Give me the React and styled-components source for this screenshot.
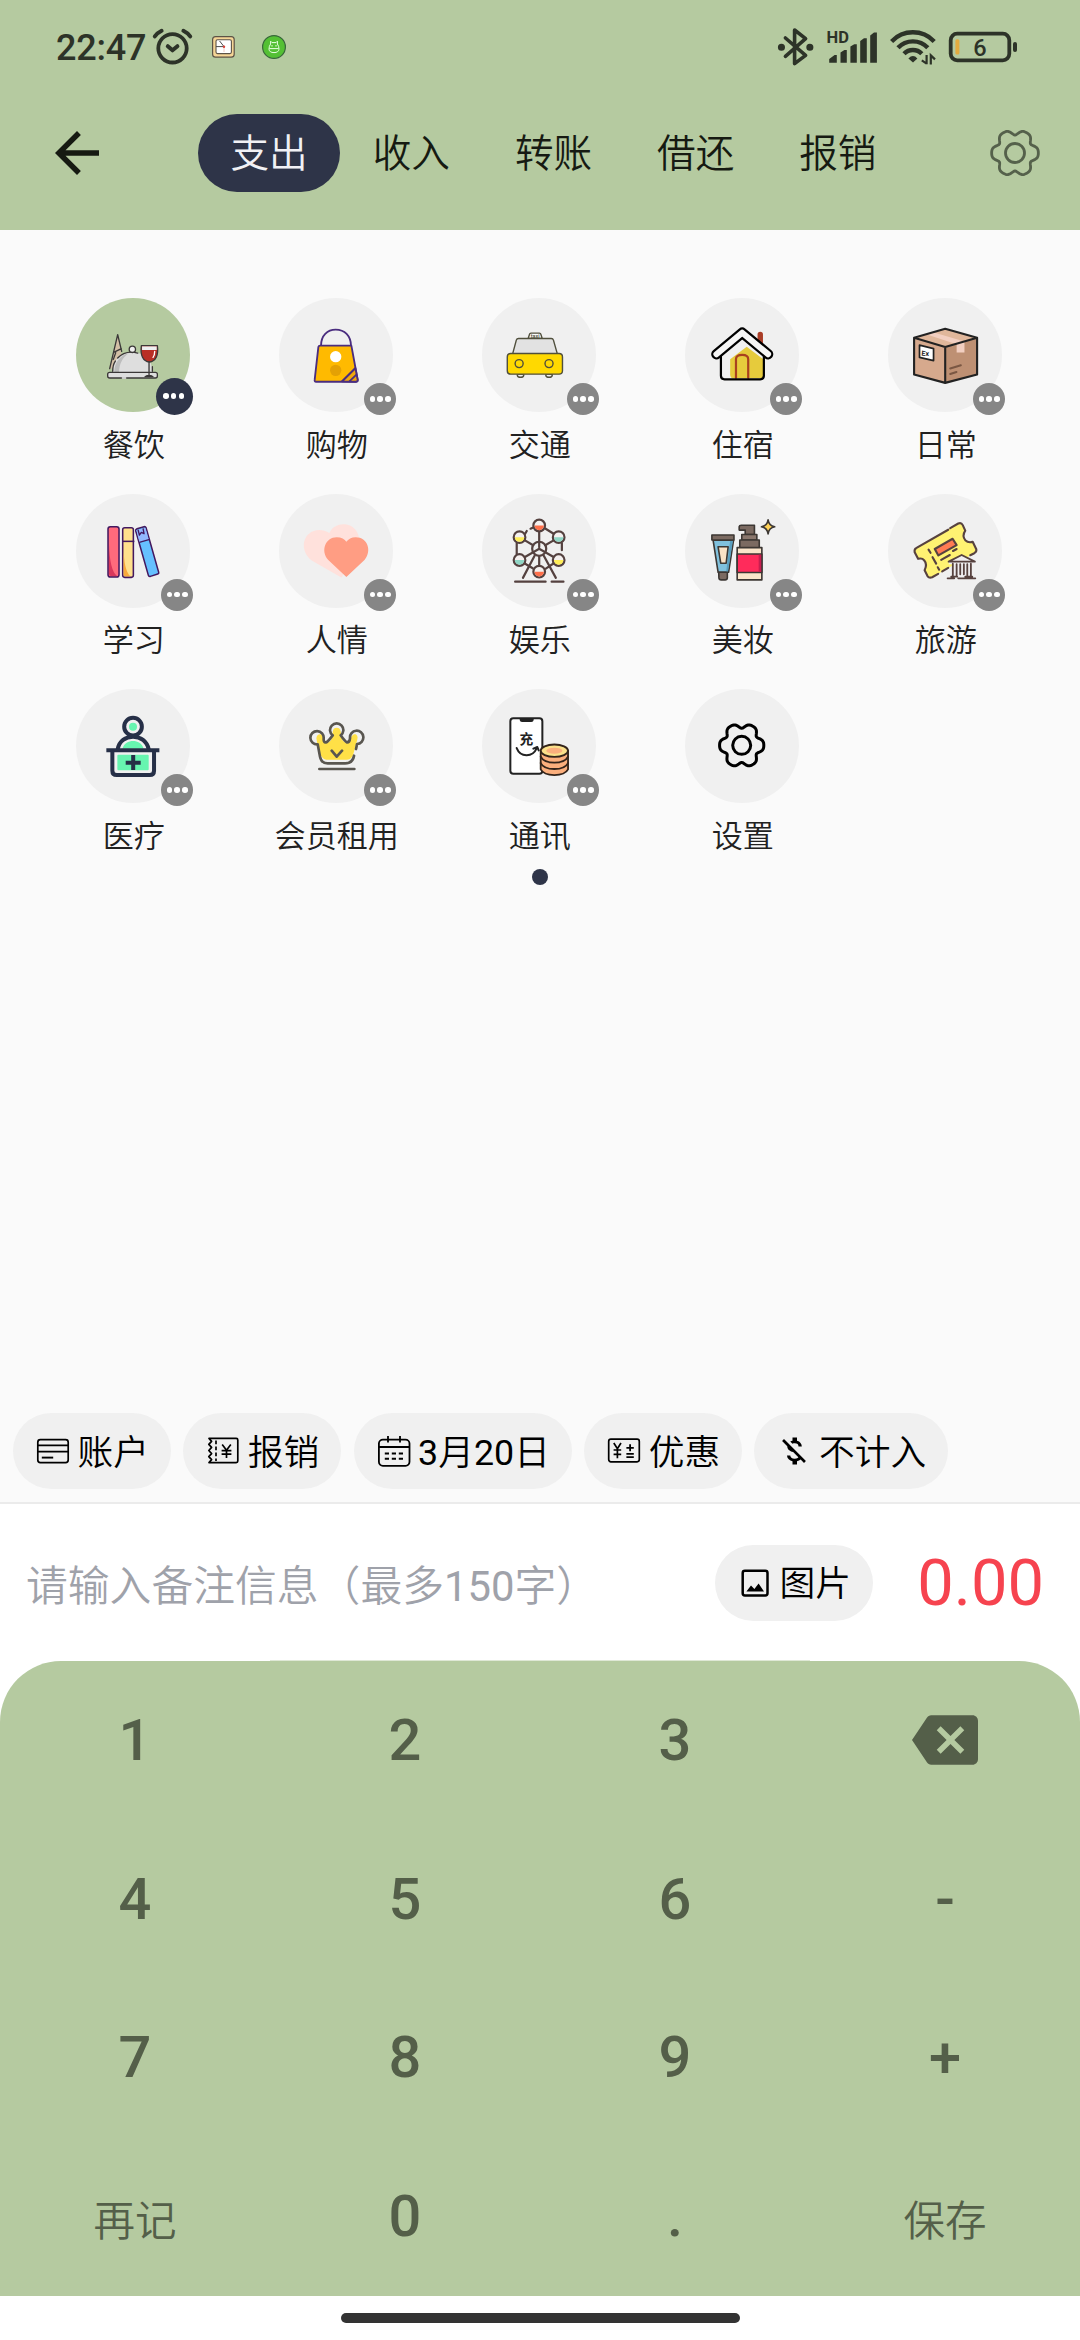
import React from "react";
import styled, { createGlobalStyle } from "styled-components";

const GREEN = "#b5caa0";
const INK = "#2e3448";
const KEY = "#545f49";
const STATUS = "#2d3328";

const GlobalStyle = createGlobalStyle`
  *, *::before, *::after { box-sizing: border-box; }
  body {
    margin: 0;
    background: #fafafa;
    font-family: Roboto, "Noto Sans CJK SC", sans-serif;
  }
`;

const Screen = styled.div`
  width: 1080px;
  height: 2340px;
  display: flex;
  flex-direction: column;
  background: #fafafa;
  overflow: hidden;
`;

const Header = styled.header`
  height: 230px;
  background: ${GREEN};
  display: flex;
  flex-direction: column;
`;

const StatusBar = styled.div`
  height: 94px;
  padding: 0 62px 0 56px;
  display: flex;
  align-items: center;
  justify-content: space-between;
`;

const StatusGroup = styled.div`
  display: flex;
  align-items: center;
  gap: ${(p) => p.$gap}px;
`;

const Clock = styled.span`
  width: 91px;
  font-size: 36px;
  font-weight: 500;
  line-height: 40px;
  letter-spacing: -0.2px;
  color: ${STATUS};
  padding-top: 2px;
`;

const Glyph = styled.svg`
  display: block;
  flex: none;
  width: ${(p) => p.$w}px;
  height: ${(p) => p.$h || p.$w}px;
  overflow: visible;
`;

const Toolbar = styled.nav`
  height: 118px;
  padding: 0 40px 0 44px;
  display: flex;
  align-items: center;
`;

const Tabs = styled.div`
  display: flex;
  margin-left: 88px;
  margin-right: auto;
`;

const Tab = styled.button`
  border: 0;
  width: 142.2px;
  height: 78px;
  padding: 2px 0 0;
  border-radius: 39px;
  background: ${(p) => (p.$active ? INK : "transparent")};
  color: ${(p) => (p.$active ? "#f1f1f5" : "#161a12")};
  font-family: inherit;
  font-size: 38.6px;
  font-weight: 350;
  line-height: 76px;
`;

const Body = styled.main`
  flex: 1;
  display: flex;
  flex-direction: column;
  padding-top: 68px;
`;

const Grid = styled.div`
  display: grid;
  grid-template-columns: repeat(5, 203px);
  grid-auto-rows: 195.5px;
  padding-left: 31.5px;
`;

const Cell = styled.div`
  display: flex;
  flex-direction: column;
  align-items: center;
`;

const Disc = styled.div`
  position: relative;
  width: 114.4px;
  height: 114.4px;
  border-radius: 50%;
  background: ${(p) => (p.$selected ? GREEN : "#f0f0f0")};
`;

const Badge = styled.span`
  position: absolute;
  right: -3px;
  bottom: -3px;
  width: ${(p) => (p.$selected ? 37 : 32)}px;
  height: ${(p) => (p.$selected ? 37 : 32)}px;
  border-radius: 50%;
  background: ${(p) => (p.$selected ? INK : "#868686")};
  display: flex;
  align-items: center;
  justify-content: center;
  gap: 2.3px;
  padding: 0 ${(p) => (p.$selected ? 2 : 0)}px ${(p) => (p.$selected ? 2 : 1)}px 0;
`;

const Dot = styled.i`
  width: 5.6px;
  height: 5.6px;
  border-radius: 50%;
  background: #fff;
`;

const Label = styled.span`
  margin-top: 11.5px;
  padding-left: 1.5px;
  font-size: 31.1px;
  font-weight: 350;
  line-height: 44px;
  color: #212121;
  white-space: nowrap;
`;

const PageDot = styled.i`
  width: 16px;
  height: 16px;
  border-radius: 50%;
  background: ${INK};
  margin: -16px auto 0;
`;

const Chips = styled.div`
  margin-top: auto;
  display: flex;
  gap: 12.3px;
  padding: 0 13px 13px;
`;

const Chip = styled.button`
  border: 0;
  height: 76px;
  padding: 0 22px;
  border-radius: 38px;
  background: #f0f0f0;
  color: #000;
  display: flex;
  align-items: center;
  gap: 6.5px;
  font-family: inherit;
  font-size: 35.75px;
  font-weight: 350;
  white-space: nowrap;
  flex: none;
`;

const ChipText = styled.span`
  padding-top: 3px;
  line-height: 60px;
`;

const Digits = styled.span`
  font-weight: 400;
`;

const NoteBar = styled.section`
  height: 159px;
  border-top: 2px solid #ebebeb;
  background: #fff;
  display: flex;
  align-items: center;
  padding: 0 36px 0 26px;
`;

const Placeholder = styled.span`
  flex: 1;
  font-size: 41.8px;
  font-weight: 350;
  line-height: 60px;
  color: #9fa2aa;
  white-space: nowrap;
  padding-top: 9px;
`;

const Amount = styled.span`
  width: 171px;
  text-align: right;
  font-size: 65px;
  line-height: 76px;
  color: #f6434f;
`;

const KeypadWrap = styled.div`
  background: #fff;
`;

const Keypad = styled.section`
  position: relative;
  height: 635px;
  background: ${GREEN};
  border-radius: 61px 61px 0 0;
  display: grid;
  grid-template-columns: repeat(4, 270px);
  grid-template-rows: repeat(4, 158.75px);
  &::before {
    content: "";
    position: absolute;
    top: -1px;
    left: 270px;
    width: 540px;
    height: 1px;
    background: #dfe8d6;
  }
`;

const Key = styled.button`
  border: 0;
  padding: ${(p) => (p.$word ? "3px 0 0" : "0 0 1px")};
  background: none;
  display: flex;
  align-items: center;
  justify-content: center;
  font-family: inherit;
  font-size: ${(p) => (p.$word ? 41.5 : 57.75)}px;
  font-weight: ${(p) => (p.$word ? 350 : 500)};
  color: ${KEY};
`;

const NavBar = styled.footer`
  height: 44px;
  background: #fff;
  display: flex;
  justify-content: center;
  padding-top: 17px;
`;

const HomePill = styled.i`
  width: 399px;
  height: 10px;
  border-radius: 5px;
  background: #333;
`;

/* ---------- gear ---------- */

// Six-lobed outline sampled in polar coordinates around the origin.
const gearPath =
  Array.from({ length: 120 }, (_, i) => {
    const t = (i / 120) * Math.PI * 2;
    const r = 60.5 + 7.6 * Math.cos(6 * t) - 1.8 * Math.cos(12 * t);
    return `${i ? "L" : "M"}${(r * Math.cos(t)).toFixed(2)} ${(r * Math.sin(t)).toFixed(2)}`;
  }).join("") + "Z";

const Gear = ({ color, width = 9 }) => (
  <g fill="none" stroke={color} strokeWidth={width} strokeLinejoin="round">
    <path d={gearPath} />
    <circle r="27" />
  </g>
);

/* ---------- status icons ---------- */

const AlarmIcon = () => (
  <Glyph $w={41} $h={38} viewBox="152 28 41 38" fill="none" stroke={STATUS} strokeLinecap="round">
    <circle cx="172.5" cy="48.3" r="14.2" strokeWidth="3.8" />
    <path d="M167.8 46.2L172.5 50.3L177.4 46.2" strokeWidth="4" strokeLinejoin="round" />
    <path d="M154.8 36.4Q157.5 32.8 161.6 30.8M183.4 30.8Q187.5 32.8 190.2 36.4" strokeWidth="4" />
  </Glyph>
);

const ClockAppIcon = () => (
  <Glyph $w={24} viewBox="211 35 24 24">
    <rect x="212.6" y="36.6" width="21.6" height="20.6" rx="3" fill="#f5d596" stroke="#5c5346" strokeWidth="1.2" />
    <rect x="216" y="39.8" width="15.4" height="13.8" rx="1.5" fill="#fff" stroke="#5c5346" strokeWidth="1.1" />
    <path d="M224 46.6L219.6 41M224 46.6H216" stroke="#4b4b4b" strokeWidth="1" />
    <path d="M224 46.6V52" stroke="#eab7b0" strokeWidth=".8" />
    <circle cx="224" cy="46.8" r="1.2" fill="#d8443a" />
  </Glyph>
);

const CatAppIcon = () => (
  <Glyph $w={24} viewBox="262 35 24 24">
    <circle cx="274" cy="47" r="11.4" fill="#54c034" stroke="#37663a" strokeWidth="1.2" />
    <g fill="none" stroke="#e9ffe2" strokeWidth="1">
      <path d="M270.6 44V41.2L272 42.6H276L277.4 41.2V44Q279 46 279 49.2Q278.6 52.6 274 52.6Q269.4 52.6 269 49.2Q269 46 270.6 44Z" />
      <path d="M269.4 48.6H278.6M272 45V46.6M276 45V46.6" />
    </g>
  </Glyph>
);

const BluetoothIcon = () => (
  <Glyph $w={37} $h={40} viewBox="777.4 27 37 40" fill="none" stroke={STATUS} strokeWidth="3.6" strokeLinejoin="round" strokeLinecap="round">
    <path d="M785.8 38L806 55.4L795 63.6V30L806 38.6L785.8 56.4" />
    <path d="M781.8 47.2h.1M810.2 47.2h.1" strokeWidth="7" />
  </Glyph>
);

const SignalIcon = () => (
  <Glyph $w={50} $h={34} viewBox="825 30 50 34" fill={STATUS}>
    <text x="824.6" y="42.8" fontFamily="Roboto, sans-serif" fontSize="16.5" fontWeight="700">HD</text>
    <path d="M827.2 62.7V59L832.6 55H834.8V62.7ZM838.5 62.7V52.4L842.4 50H844.8V62.7ZM848.4 62.7V46.6L852.3 44.2H854.8V62.7ZM858.2 62.7V41L862 38.2H864.8V62.7ZM868.2 62.7V35.6L872 32.6H874.9V62.7Z" />
  </Glyph>
);

const WifiIcon = () => (
  <Glyph $w={46} $h={36} viewBox="888 30 46 36" fill="none" stroke={STATUS} strokeWidth="4.4">
    <path d="M889.6 42.4A29.5 29.5 0 0 1 932.2 42.4" />
    <path d="M896 48.8A20.5 20.5 0 0 1 925.8 48.8" />
    <path d="M902 54.8A12.4 12.4 0 0 1 919.8 54.8" />
    <path d="M906.4 59.4Q911 54.6 915.4 59.4L911 63.6Z" fill={STATUS} stroke="none" />
    <path d="M924.6 56V65.2M919.8 61.4L924.6 64.6M928.8 65.4V56.4L933 60.4" strokeWidth="2.2" />
  </Glyph>
);

const BatteryIcon = () => (
  <Glyph $w={69} $h={30} viewBox="949 32 69 30">
    <rect x="950.7" y="33.7" width="58.6" height="26.6" rx="6.5" fill="none" stroke={STATUS} strokeWidth="3.8" />
    <rect x="1013" y="42" width="4" height="10" rx="2" fill={STATUS} />
    <rect x="955.4" y="39.2" width="4" height="15.4" rx="1.5" fill="#e3ab3f" />
    <text x="980" y="55.8" textAnchor="middle" fontFamily="Roboto, sans-serif" fontSize="23.5" fontWeight="500" fill={STATUS}>6</text>
  </Glyph>
);

/* ---------- category pictures ---------- */

const DiningPic = () => (
  <Glyph $w={114.4} viewBox="107 54 343 343" fill="none" stroke="#3b3838" strokeWidth="4" strokeLinecap="round" strokeLinejoin="round">
    <path d="M232 164L208 268L222 262Q226 240 244 228Z" fill="#d3bfa6" stroke="none" />
    <path d="M208 266L232 164L244 214M220 217L243 206M219 238L226 218" />
    <path d="M217 276C217 240 240 217 276 217C312 217 336 240 336 276Z" fill="#dedede" stroke="none" />
    <path d="M222 276C222 246 240 226 266 219C246 232 237 252 236 276Z" fill="#bdbdbd" stroke="none" />
    <path d="M217 274C217 258 220 250 225 243M232 234C246 219 268 213 292 219M336 260V274" />
    <circle cx="276" cy="208" r="9.5" fill="#f0f0f0" />
    <rect x="202" y="277" width="149" height="17" rx="6" fill="#dedede" />
    <path d="M246 294H256" stroke="#f4f4f4" />
    <path d="M303 197H351C355 226 346 244 327 246C308 244 299 226 303 197Z" fill="#b92f25" />
    <path d="M305 199H349V210H305Z" fill="#eef0f2" stroke="none" />
    <path d="M343 214Q343 226 338 232" stroke="#fff" />
    <path d="M326 246V284M314 290Q326 282 338 290Z" />
  </Glyph>
);

const BagPic = () => (
  <Glyph $w={114.4} viewBox="716 54 343 343" fill="none" stroke="#4a2d7f" strokeWidth="5.5" strokeLinejoin="round">
    <path d="M842 197C842 166 861 149 886 149C913 149 931 167 932 197" />
    <path d="M839 197H933L952 300Q952 305 946 305H827Q822 305 823 299L834 201Q835 197 839 197Z" fill="#ffba00" />
    <path d="M905 304L945 264L952 300Q952 305 946 305Z" fill="#f0a80c" />
    <path d="M927 304L949 283M905 304L945 264" />
    <circle cx="886" cy="230" r="17" fill="#fff" stroke="none" />
    <circle cx="886" cy="271" r="17" fill="#e4a104" stroke="none" />
  </Glyph>
);

const TaxiPic = () => (
  <Glyph $w={114.4} viewBox="0 0 114 114" fill="none" stroke="#504f3c" strokeWidth="1.4" strokeLinejoin="round">
    <path d="M35.2 76V77Q35.6 79 38.4 79Q41.2 79 41.6 77V76ZM63.6 76V77Q64 79 66.8 79Q69.6 79 70 77V76Z" fill="#f5f5f5" />
    <path d="M46 40.4L47.4 36Q47.6 35 48.8 35H57.2Q58.4 35 58.6 36L60 40.4Z" fill="#fafafa" />
    <text x="53" y="39.6" textAnchor="middle" stroke="none" fill="#504f3c" fontFamily="Roboto, sans-serif" fontWeight="500" fontSize="5.4">taxi</text>
    <path d="M30.6 55.4L34.2 42Q34.7 40.4 36.4 40.4H69Q70.7 40.4 71.2 42L75 55.4Z" fill="#e2e2e2" />
    <rect x="25.2" y="55.3" width="55" height="20.6" rx="3.4" fill="#ffd900" />
    <circle cx="37" cy="65.4" r="4" />
    <circle cx="66.8" cy="65.4" r="4" />
  </Glyph>
);

const HousePic = () => (
  <Glyph $w={114.4} viewBox="0 0 114 114" fill="none" strokeLinecap="round" strokeLinejoin="round">
    <path d="M75 36.3V46" stroke="#a93d27" strokeWidth="5.4" />
    <path d="M35.8 58L57 39L78.6 58V78Q78.6 80.6 76 80.6H39Q35.8 80.6 35.8 77.6Z" fill="#f0f0f0" />
    <path d="M45 61L61.5 48.6L78 61V80H48Q45 80 45 76Z" fill="#e6cb3c" />
    <path d="M50.8 79.5V61Q50.8 56.6 57 56.6Q63 56.6 63 61V79.5" stroke="#a9411f" strokeWidth="2.2" />
    <path d="M35.8 58V77.6Q35.8 81 39.4 81H75Q78.6 81 78.6 77.6V58" stroke="#000" strokeWidth="2.2" />
    <path d="M31.3 56L57 34.6L82.8 56" stroke="#000" strokeWidth="10.4" />
    <path d="M31.3 56L57 34.6L82.8 56" stroke="#f6f6f6" strokeWidth="6" />
  </Glyph>
);

const BoxPic = () => (
  <Glyph $w={114.4} viewBox="0 0 114 114" strokeLinecap="round" strokeLinejoin="round">
    <path d="M26 39.6L57 30.7L88.8 39.6L57 48.8Z" fill="#e0b79b" />
    <path d="M26 39.6L57 48.8V84.6L26 76.2Z" fill="#d6a98d" />
    <path d="M57 48.8L88.8 39.6V76.2L57 84.6Z" fill="#be9073" />
    <path d="M38 36.2L45 34.2L76.2 43.4V54.2H68.4V46Z" fill="#f2cfc1" />
    <path d="M26 39.6L57 30.7L88.8 39.6V76.2L57 84.6L26 76.2ZM26 39.6L57 48.8L88.8 39.6M57 48.8V84.6" fill="none" stroke="#222" strokeWidth="2.1" />
    <path d="M31.4 47L45.4 50.4V62.4L31.4 59.2Z" fill="#fff" stroke="#222" strokeWidth="1.7" />
    <text x="33.2" y="57.2" transform="rotate(6 33 57)" fontFamily="Roboto, sans-serif" fontWeight="700" fontSize="7" fill="#222">Ex</text>
    <path d="M62 70.2L72.6 67M62 75.8L68.2 73.8" stroke="#7a5743" strokeWidth="2" />
  </Glyph>
);

const BooksPic = () => (
  <Glyph $w={114.4} viewBox="107 41 343 343" fill="none" stroke="#43185f" strokeWidth="4.6" strokeLinejoin="round">
    <rect x="203" y="139" width="33" height="151" rx="7" fill="#ff6a7c" />
    <path d="M206 190Q208 270 230 287H212Q206 287 206 280Z" fill="#d9375c" stroke="none" />
    <rect x="247" y="142" width="32" height="149" rx="6" fill="#ffe08c" />
    <path d="M250 200Q250 270 270 288H255Q250 288 250 282Z" fill="#f9a93b" stroke="none" />
    <path d="M245 183H282" />
    <path d="M290 145L311 139Q315 138 317 142L355 276Q356 280 352 281L330 288Q325 289 324 285L286 151Q285 147 290 145Z" fill="#66c0ff" />
    <path d="M288 150L315 142L325 177L297 185Z" fill="#92b8ff" stroke="none" />
    <path d="M297 186L328 177M293 148L297 164L303 156L311 160L308 144" strokeWidth="4" />
  </Glyph>
);

const HeartPic = () => (
  <Glyph $w={114.4} viewBox="716 41 343 343">
    <path d="M903 291L818 243C786 222 782 180 806 160C822 146 848 146 867 158C876 138 896 130 914 132C936 134 952 150 956 172L905 290Z" fill="#ffe1dc" />
    <path d="M918 290L863 238C840 212 855 171 889 171C903 171 913 177 918 184C924 177 933 171 946 171C982 171 995 212 973 238Z" fill="#ff9d83" />
  </Glyph>
);

const cabins = [
  [57, 31.4, "#ff6f4a"],
  [76.4, 43, "#8fd6c5"],
  [76.4, 65.8, "#ffee58"],
  [57, 77.4, "#ff6f4a"],
  [37.4, 65.8, "#8fd6c5"],
  [37.4, 43, "#ffee58"],
];

const WheelPic = () => (
  <Glyph $w={114.4} viewBox="0 0 114 114" fill="none" stroke="#54413f" strokeWidth="2.2" strokeLinecap="round">
    <path d="M43 39.6L44.6 36.8M48.4 34.6L51 33.4M63 34.4L71.4 39.6M34.6 49V60M79.6 49V56M71.6 69L63.6 74.4M42.6 69.2L50.6 74" />
    <path d="M57 37.6V53M42.8 46.2L51 51M71.4 46.2L63 51M42.8 62.8L57 54.6L71.4 62.8M57 62V71" />
    <circle cx="57" cy="54.6" r="7" />
    <path d="M52.4 61.6L40.8 83.6M61.6 61.6L73.6 83.6M33 87.4H63.4M69.4 87.4H81.2" />
    {cabins.map(([x, y, c]) => (
      <g key={`${x}-${y}`}>
        <circle cx={x} cy={y} r="5.8" fill="#f4f0ef" />
        <path d={`M${x - 4.7} ${y}H${x + 4.7}A4.7 4.7 0 0 1 ${x - 4.7} ${y}Z`} fill={c} stroke="none" />
      </g>
    ))}
  </Glyph>
);

const CosmeticsPic = () => (
  <Glyph $w={114.4} viewBox="0 0 114 114" stroke="#3c3733" strokeWidth="1.6" strokeLinejoin="round">
    <path d="M28 46H48.4L43.4 78H33Z" fill="#80c1dd" />
    <path d="M45 46.6H47.8L42.8 77.6H41Z" fill="#5a9fbf" stroke="none" />
    <path d="M33 52.6H43L41 69H35.6Z" fill="#f9e2c6" />
    <rect x="26.8" y="40.8" width="22" height="5" fill="#7b6a61" />
    <path d="M33.6 78H42.2V83.6Q42 85.6 40 85.6H36Q34 85.6 33.8 83.6Z" fill="#7b6a61" />
    <path d="M54 36V32.6Q54.2 31.2 56 31.2H69.2V40.4H60V36Z" fill="#7b6a61" />
    <rect x="56.6" y="40.4" width="15" height="5.4" fill="#8a776d" />
    <rect x="54.6" y="45.8" width="19.4" height="8" fill="#7b6a61" />
    <rect x="52" y="53.4" width="24.6" height="32.2" fill="#fae5ca" />
    <rect x="52" y="59.8" width="24.6" height="18.4" fill="#ff2b5b" />
    <path d="M73.4 60.4H76V77.6H73.4Z" fill="#c71e50" stroke="none" />
    <path d="M82.8 25.8Q83.6 31.6 89.4 32.7Q83.6 33.8 82.8 39.8Q82 33.8 76.2 32.7Q82 31.6 82.8 25.8Z" fill="#ffd257" />
  </Glyph>
);

const TravelPic = () => (
  <Glyph $w={114.4} viewBox="0 0 114 114" fill="none" stroke="#57423f" strokeWidth="2.1" strokeLinecap="round" strokeLinejoin="round">
    <path d="M28 54L70 29.4Q73 28 74.5 31L77 36.5Q73.6 41.6 77 46Q80 49 84.4 47.6L88 55Q88.5 57.5 86 59L44 83Q41 84 39.5 82L36.5 76Q39.4 70 36 66Q34 63.5 30 64.6L26.6 58Q26 55 28 54Z" fill="#fff272" stroke="none" />
    <path d="M62 34L70 29.4Q73 28 74.5 31L77 36.5Q73.6 41.6 77 46Q80 49 84.4 47.6L88 55Q88.5 57.5 86 59L82 61M60 35.6L28 54Q26 55 26.6 58L30 64.6Q34 63.5 36 66Q39.4 70 36.5 76L39.5 82Q41 84 44 83L50 79.6M54 77.2L60 73.6" />
    <path d="M46.6 54.8L64.4 44.6L68.4 51L50.2 61.2Z" fill="#ff7b53" />
    <path d="M40.4 55.4L42.4 58.6M44.4 63L48 69.4M49.6 73L51 75.4M53 65.6L61.6 60.8M64.8 56.8L68.4 54.8" />
    <path d="M60.6 68L73.4 61L86.6 68V70H82.8V83H64.4V70H60.6Z" fill="#f0eef0" stroke="none" />
    <path d="M60.4 67.4L73.4 60.8L86.6 67.4H60.4M64.6 69.4V82M68.4 70V82M72 70V80M75.6 70V80M79 70V82M82.6 69.4V82M63 82.4H69M77 82.4H84M59.4 84H66M70 84H87" strokeWidth="1.8" />
  </Glyph>
);

const MedicPic = () => (
  <Glyph $w={114.4} viewBox="107 57 343 343" fill="none" stroke="#262f47" strokeWidth="12">
    <path d="M246 236C252 219 264 213 278 213C292 213 304 219 310 236Z" fill="#67f5b0" stroke="none" />
    <circle cx="278" cy="170" r="26.5" />
    <circle cx="278" cy="170" r="12" fill="#67f5b0" stroke="none" />
    <path d="M232 238C236 213 256 200 278 200C300 200 320 213 325 238" />
    <path d="M198 241H357" />
    <path d="M216 245V302Q216 315 229 315H328Q341 315 341 302V245" />
    <rect x="231" y="254" width="94" height="47" rx="3" fill="#67f5b0" stroke="none" />
    <path d="M256 278H301M278.5 255V300" />
  </Glyph>
);

const CrownPic = () => (
  <Glyph $w={114.4} viewBox="716 57 343 343" fill="none" stroke="#595650" strokeWidth="8" strokeLinecap="round" strokeLinejoin="round">
    <path d="M838 262L828 205Q830 190 843 193Q850 200 850 214Q860 226 872 210L877 186Q878 173 889 173Q900 173 901 186L906 210Q918 226 927 214Q932 194 944 192Q954 196 951 208L939 252Q935 268 920 269H858Q848 268 843 258Z" fill="#ffe047" stroke="none" />
    <path d="M941 257Q937 280 914 280H862Q843 280 839 260L832 223A20 20 0 1 1 850 205Q849 218 857 217Q862 216 877 196A20 20 0 1 1 901 196Q914 215 920 217Q928 217 929 204A20 20 0 1 1 950 222L947 237" />
    <path d="M874 242L889 260L905 242M837 297H942" />
  </Glyph>
);

const PhonePic = () => (
  <Glyph $w={114.4} viewBox="65 57 343 343" fill="none" stroke="#222" strokeWidth="6" strokeLinecap="round" strokeLinejoin="round">
    <rect x="150" y="145" width="96" height="166" rx="9" fill="#fff" />
    <path d="M178 145H220V150Q219 156 213 156H185Q179 156 178 150Z" fill="#222" stroke="none" />
    <text x="198" y="223" textAnchor="middle" fill="#222" stroke="none" fontFamily="'Noto Sans CJK SC', sans-serif" fontWeight="700" fontSize="41">充</text>
    <path d="M169 234C180 262 216 263 229 235M219 236L231 231L235 241" />
    <g stroke="#33241a" strokeWidth="5.5">
      <path d="M241 242V298Q250 315 282 315Q314 315 323 298V242Z" fill="#fbaf7d" />
      <path d="M241 260Q250 278 282 278Q314 278 323 260M241 279Q250 297 282 297Q314 297 323 279" />
      <ellipse cx="282" cy="242" rx="41" ry="18.5" fill="#fbe08a" />
      <ellipse cx="282" cy="242" rx="24" ry="9" fill="#fbaf7d" stroke="none" />
    </g>
  </Glyph>
);

const SettingsPic = () => (
  <Glyph $w={114.4} viewBox="-170 -169 343 343">
    <Gear color="#000" />
  </Glyph>
);

/* ---------- chip icons, 36px box ---------- */

const CardIcon = () => (
  <Glyph $w={36} viewBox="0 0 36 36" fill="none" stroke="#000" strokeWidth="1.7">
    <rect x="2.8" y="6.6" width="30.4" height="23" rx="2.6" />
    <path d="M3 12.4H33M3 18.7H33" />
    <path d="M6.8 24.6H18.2" strokeWidth="1.9" />
  </Glyph>
);

const TicketIcon = () => (
  <Glyph $w={36} viewBox="0 0 36 36" fill="none" stroke="#000" strokeWidth="1.7" strokeLinejoin="round">
    <path d="M4 5.4H31.2Q32.8 5.4 32.8 7V28Q32.8 29.6 31.2 29.6H4L6.6 26.6L3.8 23.6L6.6 20.6L3.8 17.5L6.6 14.4L3.8 11.4L6.6 8.4Z" />
    <path d="M11 7.4V28" strokeDasharray="3.8 2.2" />
    <path d="M17.2 11.6L21.5 17.2L25.8 11.6M21.5 17.2V25M16.6 17.6H26.4M16.6 21.2H26.4" />
  </Glyph>
);

const CalendarIcon = () => (
  <Glyph $w={36} viewBox="0 0 36 36" fill="none" stroke="#000" strokeWidth="1.8">
    <rect x="2.9" y="6.6" width="30.6" height="26.2" rx="4" />
    <path d="M3 14H33.4M12 3V9.4M24 3V9.4" />
    <path d="M8.8 20.6H13M15.8 20.6H20M22.8 20.6H27M8.8 25.8H13M15.8 25.8H20M22.8 25.8H27" strokeWidth="2" />
  </Glyph>
);

const CouponIcon = () => (
  <Glyph $w={36} viewBox="0 0 36 36" fill="none" stroke="#000" strokeWidth="1.7">
    <rect x="2.7" y="6.2" width="30.6" height="22.6" rx="2.2" />
    <path d="M7.8 10L11.4 15.6L15 10M11.4 15.6V25.2M7.6 17H15.2M7.6 21.4H15.2" />
    <path d="M20.4 14.8H27.8M24.1 11.2V18.2M20.4 20.8H27.8M20.4 24.2H27.8" strokeWidth="1.8" />
  </Glyph>
);

const MoneyOffIcon = () => (
  <Glyph $w={36} viewBox="0 0 24 24" fill="#000">
    <path d="M12.5 6.9c1.78 0 2.44.85 2.5 2.1h2.21c-.07-1.72-1.12-3.3-3.21-3.81V3h-3v2.16c-.53.12-1.03.3-1.48.54l1.47 1.47c.41-.17.91-.27 1.51-.27zM5.33 4.06L4.06 5.33 7.5 8.77c0 2.08 1.56 3.21 3.91 3.91l3.51 3.51c-.34.48-1.05.91-2.42.91-2.06 0-2.87-.92-2.98-2.1h-2.2c.12 2.19 1.76 3.42 3.68 3.83V21h3v-2.15c.96-.18 1.82-.55 2.45-1.12l2.22 2.22 1.27-1.27L5.33 4.06z" />
  </Glyph>
);

const ImageIcon = () => (
  <Glyph $w={36} viewBox="0 0 36 36">
    <rect x="5.7" y="5.7" width="24.8" height="24.8" rx="2.2" fill="none" stroke="#000" strokeWidth="2.5" />
    <path d="M9.4 26.4L14 20.6L17.4 24L21.6 18.4L27 26.4Z" fill="#000" />
  </Glyph>
);

const BackspaceIcon = () => (
  <Glyph $w={66} viewBox="0 0 24 24" fill={KEY}>
    <path d="M22 3H7c-.69 0-1.23.35-1.59.88L0 12l5.41 8.11c.36.53.9.89 1.59.89h15c1.1 0 2-.9 2-2V5c0-1.1-.9-2-2-2zm-3 12.59L17.59 17 14 13.41 10.41 17 9 15.59 12.59 12 9 8.41 10.41 7 14 10.59 17.59 7 19 8.41 15.41 12 19 15.59z" />
  </Glyph>
);

/* ---------- data ---------- */

const tabs = ["支出", "收入", "转账", "借还", "报销"];

const categories = [
  ["餐饮", DiningPic],
  ["购物", BagPic],
  ["交通", TaxiPic],
  ["住宿", HousePic],
  ["日常", BoxPic],
  ["学习", BooksPic],
  ["人情", HeartPic],
  ["娱乐", WheelPic],
  ["美妆", CosmeticsPic],
  ["旅游", TravelPic],
  ["医疗", MedicPic],
  ["会员租用", CrownPic],
  ["通讯", PhonePic],
  ["设置", SettingsPic],
];

const chips = [
  ["账户", CardIcon],
  ["报销", TicketIcon],
  ["3月20日", CalendarIcon],
  ["优惠", CouponIcon],
  ["不计入", MoneyOffIcon],
];

const keys = ["1", "2", "3", "del", "4", "5", "6", "-", "7", "8", "9", "+", "再记", "0", ".", "保存"];

// Latin digits take the regular weight, Han characters the lighter one.
const mixed = (text) =>
  text.split(/(\d+)/).map((part, i) => (i % 2 ? <Digits key={i}>{part}</Digits> : part));

export default function App() {
  return (
    <>
      <GlobalStyle />
      <Screen>
        <Header>
          <StatusBar>
            <StatusGroup $gap={18}>
              <StatusGroup $gap={5}>
                <Clock>22:47</Clock>
                <AlarmIcon />
              </StatusGroup>
              <StatusGroup $gap={27}>
                <ClockAppIcon />
                <CatAppIcon />
              </StatusGroup>
            </StatusGroup>
            <StatusGroup $gap={13}>
              <BluetoothIcon />
              <SignalIcon />
              <WifiIcon />
              <BatteryIcon />
            </StatusGroup>
          </StatusBar>
          <Toolbar>
            <Glyph $w={66} viewBox="0 0 24 24" fill="#161a12">
              <path d="M20 11H7.83l5.59-5.59L12 4l-8 8 8 8 1.41-1.41L7.83 13H20v-2z" />
            </Glyph>
            <Tabs>
              {tabs.map((t, i) => (
                <Tab key={t} $active={i === 0}>{t}</Tab>
              ))}
            </Tabs>
            <Glyph $w={50} viewBox="-71 -71 142 142">
              <Gear color="#55614b" width={8} />
            </Glyph>
          </Toolbar>
        </Header>
        <Body>
          <Grid>
            {categories.map(([name, Pic], i) => (
              <Cell key={name}>
                <Disc $selected={i === 0}>
                  <Pic />
                  {name !== "设置" && (
                    <Badge $selected={i === 0}>
                      <Dot />
                      <Dot />
                      <Dot />
                    </Badge>
                  )}
                </Disc>
                <Label>{name}</Label>
              </Cell>
            ))}
          </Grid>
          <PageDot />
          <Chips>
            {chips.map(([name, Icon]) => (
              <Chip key={name}>
                <Icon />
                <ChipText>{mixed(name)}</ChipText>
              </Chip>
            ))}
          </Chips>
        </Body>
        <NoteBar>
          <Placeholder>{mixed("请输入备注信息（最多150字）")}</Placeholder>
          <Chip>
            <ImageIcon />
            <ChipText>图片</ChipText>
          </Chip>
          <Amount>0.00</Amount>
        </NoteBar>
        <KeypadWrap>
          <Keypad>
            {keys.map((k) => (
              <Key key={k} $word={k === "再记" || k === "保存"}>
                {k === "del" ? <BackspaceIcon /> : k}
              </Key>
            ))}
          </Keypad>
        </KeypadWrap>
        <NavBar>
          <HomePill />
        </NavBar>
      </Screen>
    </>
  );
}
